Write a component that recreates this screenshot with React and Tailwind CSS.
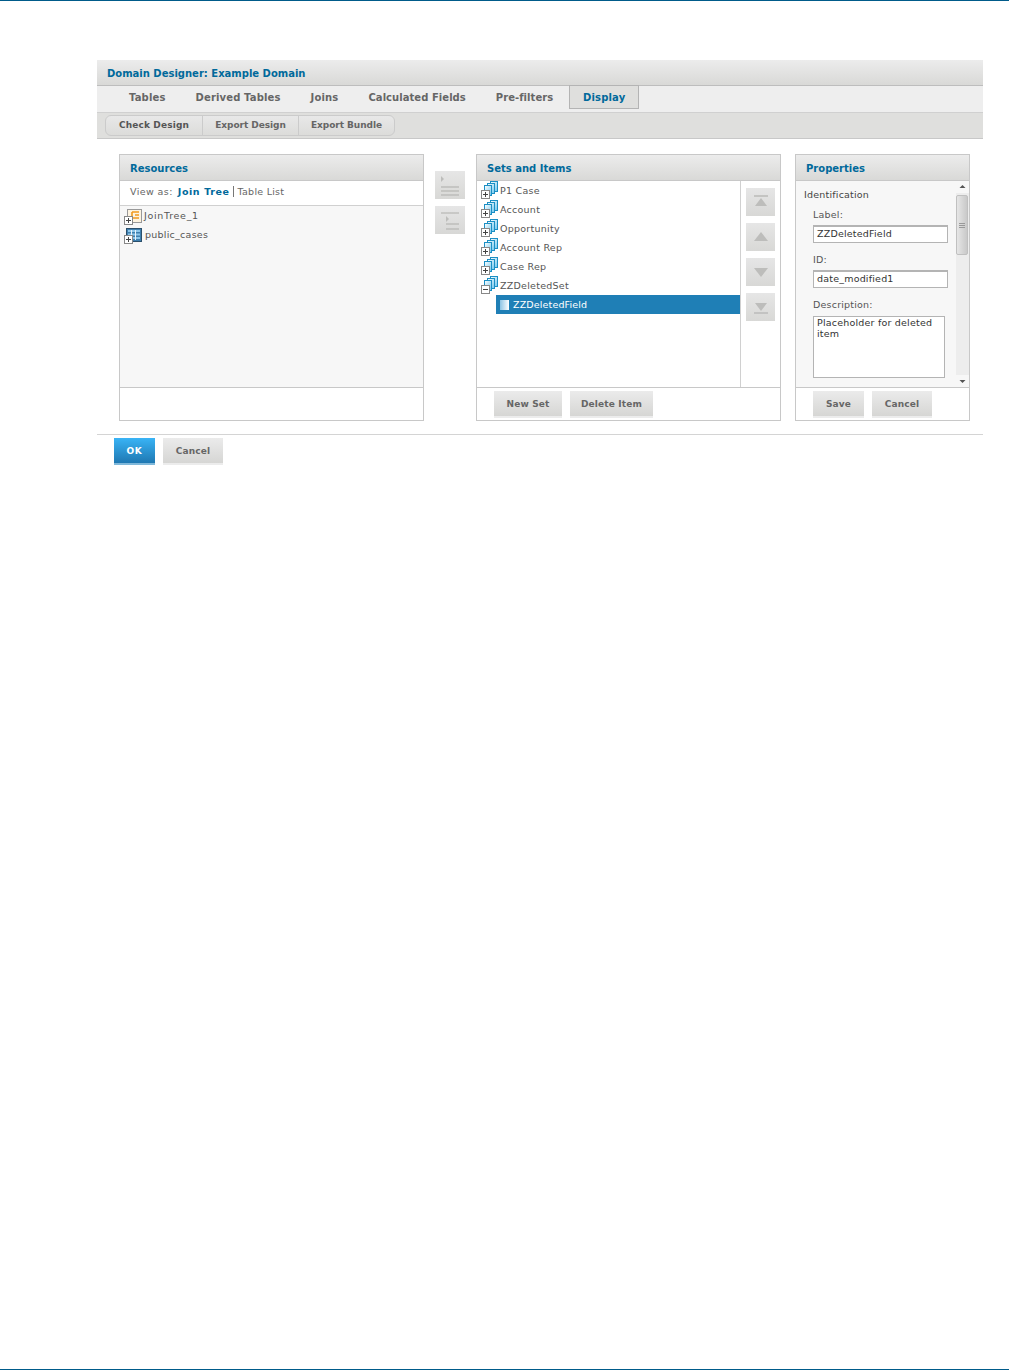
import React from 'react';

const heading = "font-bold text-[#00699b] text-[10px]";
const greyBtn = "bg-gradient-to-b from-[#ebebeb] to-[#d6d6d4] border-b-2 border-[#ececec] pt-[2px] text-[#666] font-bold text-[9px] tracking-[0.15px] flex items-center justify-center";

function PlusBox({ minus, x = 0, y = 7 }) {
  return (
    <g>
      <rect x={x + 0.5} y={y + 0.5} width="8" height="8" fill="#fff" stroke="#888" />
      <path d={`M${x + 2} ${y + 4.5}H${x + 7}`} stroke="#444" />
      {!minus && <path d={`M${x + 4.5} ${y + 2}V${y + 7}`} stroke="#444" />}
    </g>
  );
}

function SetIcon({ minus }) {
  return (
    <svg width="18" height="19" viewBox="0 0 18 19" className="shrink-0">
      <defs>
        <linearGradient id="sheet" x1="0" y1="0" x2="1" y2="1">
          <stop offset="0" stopColor="#ffffff" />
          <stop offset="1" stopColor="#6fc6ee" />
        </linearGradient>
      </defs>
      <rect x="9.5" y="0.5" width="7" height="10" fill="url(#sheet)" stroke="#1b8fc4" />
      <rect x="6.5" y="2.5" width="7" height="10" fill="url(#sheet)" stroke="#1b8fc4" />
      <rect x="3.5" y="4.5" width="7" height="10" fill="url(#sheet)" stroke="#1b8fc4" />
      <PlusBox minus={minus} x={0} y={9} />
    </svg>
  );
}

function JoinTreeIcon() {
  return (
    <svg width="18" height="16" viewBox="0 0 18 16" className="shrink-0">
      <rect x="3.5" y="0.5" width="14" height="13" fill="#fdf3e0" stroke="#999" />
      <path d="M8 3h7M11 6h4M11 9h4" stroke="#f19a1f" strokeWidth="1.6" />
      <path d="M8 3v6h3" fill="none" stroke="#f19a1f" strokeWidth="1.6" />
      <PlusBox x={0} y={7} />
    </svg>
  );
}

function TableIcon() {
  return (
    <svg width="18" height="16" viewBox="0 0 18 16" className="shrink-0">
      <rect x="2.5" y="0.5" width="15" height="13" fill="#3f7fae" stroke="#2b4f6b" />
      <path d="M4 3h12M4 6.5h12M4 10h12" stroke="#8cc6ea" strokeWidth="2" />
      <path d="M7.5 2v10M11.5 2v10" stroke="#e8f3fa" />
      <PlusBox x={0} y={7} />
    </svg>
  );
}

function Panel({ title, className, children, footer }) {
  return (
    <div className={`flex flex-col border border-[#c8c8c8] ${className}`}>
      <div className={`h-[26px] shrink-0 flex items-center pl-[10px] pt-[2px] bg-gradient-to-b from-[#ececec] to-[#d9d9d7] border-b border-[#c8c8c8] ${heading}`}>
        {title}
      </div>
      <div className="h-[206px] shrink-0 flex flex-col">{children}</div>
      <div className="flex-1 border-t border-[#c8c8c8] flex items-start gap-2 pt-[3px] pl-[17px]">{footer}</div>
    </div>
  );
}

function SideButton({ children, className = 'w-[30px]' }) {
  return (
    <div className={`h-[28px] bg-gradient-to-b from-[#e6e6e6] to-[#d8d8d6] ${className}`}>
      <svg width="30" height="28" viewBox="0 0 30 28">{children}</svg>
    </div>
  );
}

function Tree({ icon, label, className = '' }) {
  return (
    <div className={`h-[19px] flex items-center text-[9.5px] text-[#555] tracking-[0.25px] ${className}`}>
      {icon}
      <span className="ml-[1px]">{label}</span>
    </div>
  );
}

const arrow = '#bdbdbb';

export default function App() {
  return (
    <div className="h-[1370px] bg-white flex flex-col border-t border-[#005b8a] font-['DejaVu_Sans',sans-serif]">
      <div className="flex-1 pt-[59px] pl-[97px] pr-[26px]">
        <div className={`h-[26px] flex items-center pl-[10px] pt-[2px] bg-gradient-to-b from-[#ececec] to-[#d9d9d7] border-b border-[#bdbdbd] ${heading}`}>
          Domain Designer: Example Domain
        </div>
        <div className="h-[27px] bg-[#eeeeee] border-b border-[#d0d0d0] flex text-[10px] font-bold text-[#666] tracking-[0.15px]">
          <div className="flex items-center pb-[3px] gap-[30px] pl-[32px] pr-[16px]">
            <span>Tables</span>
            <span>Derived Tables</span>
            <span>Joins</span>
            <span className="tracking-[0.05px]">Calculated Fields</span>
            <span className="tracking-[0.05px]">Pre-filters</span>
          </div>
          <div className="w-[70px] h-[24px] -mt-px bg-[#dfdfdd] border border-[#b4b4b4] flex items-center justify-center text-[#00699b]">
            Display
          </div>
        </div>
        <div className="h-[26px] bg-[#dfdfdd] border-b border-[#c8c8c8] pl-[8px] pt-[2px]">
          <div className="h-[21px] w-fit flex border border-[#cbcbcb] rounded-[6px] text-[9px] font-bold text-[#666] tracking-[-0.05px] bg-gradient-to-b from-[#e8e8e8] to-[#dcdcda]">
            <div className="w-[97px] flex items-center justify-center border-r border-[#cbcbcb] text-[#555] tracking-[0.15px]">Check Design</div>
            <div className="w-[96px] flex items-center justify-center border-r border-[#cbcbcb]">Export Design</div>
            <div className="w-[95px] flex items-center justify-center">Export Bundle</div>
          </div>
        </div>

        <div className="flex h-[267px] mt-[15px] pl-[22px]">
          <Panel title="Resources" className="w-[305px]">
            <div className="h-[25px] shrink-0 flex items-center pl-[10px] pb-[1px] border-b border-[#d0d0d0] text-[9.5px] text-[#666] tracking-[0.4px]">
              View as:
              <span className="ml-[5px] font-bold text-[#00699b] tracking-[0.6px]">Join Tree</span>
              <span className="ml-[3px] pl-[4px] -mt-[2px] border-l border-[#777] leading-[11px] tracking-[0.25px]">Table List</span>
            </div>
            <div className="flex-1 bg-[#f7f7f7] pl-[4px] pt-px">
              <Tree icon={<JoinTreeIcon />} label="JoinTree_1" className="[&>span]:ml-[2px] [&>span]:tracking-[0.7px]" />
              <Tree icon={<TableIcon />} label="public_cases" className="[&>span]:ml-[3px]" />
            </div>
          </Panel>

          <div className="w-[30px] ml-[11px] mr-[11px] pt-[17px] flex flex-col gap-[7px]">
            <SideButton>
              <path d="M6 5l3 3-3 3z" fill={arrow} />
              <path d="M6 16h18M6 20h18M6 24h18" stroke={arrow} strokeWidth="1.4" />
            </SideButton>
            <SideButton>
              <path d="M6 7h18" stroke={arrow} strokeWidth="1.4" />
              <path d="M11 10l3 3-3 3z" fill={arrow} />
              <path d="M11 18h13M11 23h13" stroke={arrow} strokeWidth="1.4" />
            </SideButton>
          </div>

          <Panel
            title="Sets and Items"
            className="w-[305px]"
            footer={
              <>
                <div className={`${greyBtn} w-[68px] h-[27px]`}>New Set</div>
                <div className={`${greyBtn} w-[83px] h-[27px]`}>Delete Item</div>
              </>
            }
          >
            <div className="flex h-full">
              <div className="flex-1 pl-[4px]">
                {['P1 Case', 'Account', 'Opportunity', 'Account Rep', 'Case Rep'].map((s) => (
                  <Tree key={s} icon={<SetIcon />} label={s} className="[&>span]:mt-[2px]" />
                ))}
                <Tree icon={<SetIcon minus />} label="ZZDeletedSet" className="[&>span]:mt-[2px]" />
                <div className="h-[19px] ml-[15px] pt-[2px] bg-[#1f7fb6] flex items-center pl-[4px] text-[9.5px] text-white tracking-[0.15px]">
                  <span className="w-[9px] h-[10px] -mt-[2px] bg-gradient-to-r from-[#8cc4e4] to-white mr-[4px]" />
                  ZZDeletedField
                </div>
              </div>
              <div className="w-[40px] border-l border-[#d0d0d0] pt-[7px] pl-[5px] flex flex-col gap-[7px]">
                <SideButton className="w-[29px]">
                  <path d="M8 8h14" stroke={arrow} strokeWidth="1.6" />
                  <path d="M15 10l6 8H9z" fill={arrow} />
                </SideButton>
                <SideButton className="w-[29px]">
                  <path d="M15 9l7 9H8z" fill={arrow} />
                </SideButton>
                <SideButton className="w-[29px]">
                  <path d="M15 19l7-9H8z" fill={arrow} />
                </SideButton>
                <SideButton className="w-[29px]">
                  <path d="M15 18l6-8H9z" fill={arrow} />
                  <path d="M8 20h14" stroke={arrow} strokeWidth="1.6" />
                </SideButton>
              </div>
            </div>
          </Panel>

          <Panel
            title="Properties"
            className="w-[175px] ml-[14px]"
            footer={
              <>
                <div className={`${greyBtn} w-[51px] h-[27px]`}>Save</div>
                <div className={`${greyBtn} w-[60px] h-[27px]`}>Cancel</div>
              </>
            }
          >
            <div className="flex h-full bg-[#f7f7f7]">
              <div className="flex-1 overflow-hidden pl-[8px] pt-[7px] text-[9.5px] tracking-[0.2px] text-[#555]">
                <div className="h-[13px] leading-[13px] text-[#444]">Identification</div>
                <div className="ml-[9px] mt-[7px] h-[13px] leading-[13px]">Label:</div>
                <div className="ml-[9px] mt-[4px] w-[135px] h-[18px] bg-white border border-[#b4b4b4] border-t-2 flex items-center pl-[3px] text-[#333]">ZZDeletedField</div>
                <div className="ml-[9px] mt-[10px] h-[13px] leading-[13px]">ID:</div>
                <div className="ml-[9px] mt-[4px] w-[135px] h-[18px] bg-white border border-[#b4b4b4] border-t-2 flex items-center pl-[3px] text-[#333]">date_modified1</div>
                <div className="ml-[9px] mt-[10px] h-[13px] leading-[13px]">Description:</div>
                <div className="ml-[9px] mt-[5px] w-[132px] h-[62px] bg-white border border-[#b4b4b4] px-[3px] leading-[11px] text-[#333]">Placeholder for deleted item</div>
              </div>
              <div className="w-[13px] bg-[#ededed] flex flex-col items-center justify-between relative">
                <svg width="13" height="12" viewBox="0 0 13 12" className="bg-[#f7f7f7]"><path d="M6.5 4l3 3h-6z" fill="#555" /></svg>
                <div className="absolute top-[14px] left-0 w-[12px] h-[60px] bg-gradient-to-r from-[#e6e6e6] to-[#c9c9c9] border border-[#c0c0c0] rounded-[2px] flex flex-col items-center justify-center gap-[1px]">
                  <span className="w-[6px] h-px bg-[#999]" />
                  <span className="w-[6px] h-px bg-[#999]" />
                  <span className="w-[6px] h-px bg-[#999]" />
                </div>
                <svg width="13" height="12" viewBox="0 0 13 12" className="bg-[#f7f7f7]"><path d="M6.5 8l-3-3h6z" fill="#555" /></svg>
              </div>
            </div>
          </Panel>
        </div>

        <div className="mt-[13px] border-t border-[#d4d4d4] pl-[17px] pt-[3px] flex gap-2">
          <div className="w-[41px] h-[27px] pt-[2px] bg-gradient-to-b from-[#39b4f6] to-[#1f78b2] border-b-2 border-[#7fb8da] text-white font-bold text-[9px] tracking-[0.6px] flex items-center justify-center">OK</div>
          <div className={`${greyBtn} w-[60px] h-[27px]`}>Cancel</div>
        </div>
      </div>
      <div className="h-px bg-[#005b8a]" />
    </div>
  );
}
